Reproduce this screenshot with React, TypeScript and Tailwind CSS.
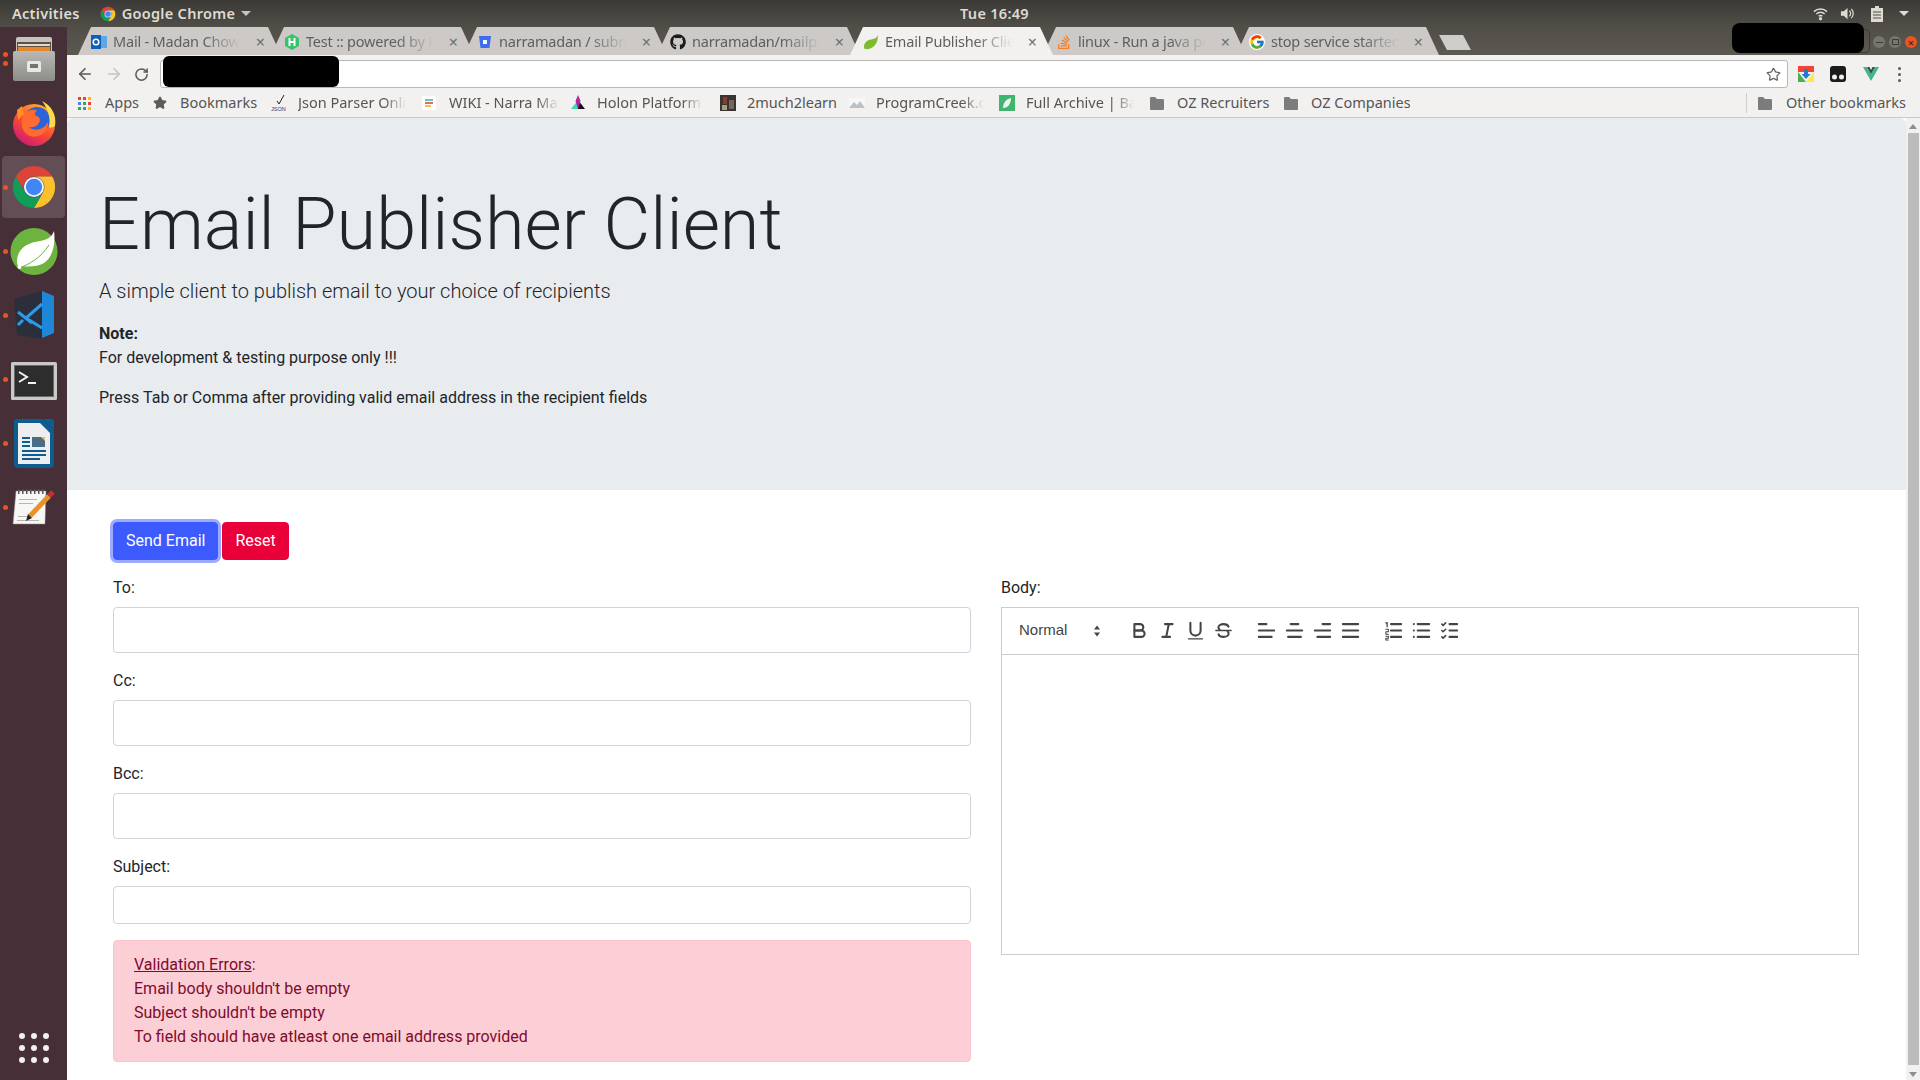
import { ReactNode } from "react";
import { FaGithub, FaStackOverflow } from "react-icons/fa";
import { FcGoogle } from "react-icons/fc";
import { ArrowLeft, ArrowRight, RotateCw, Star } from "lucide-react";

function ChromeLogo({ className }: { className: string }) {
  return (
    <svg viewBox="0 0 48 48" className={className}>
      <path fill="#db4437" d="M24 2A22 22 0 0 0 4.95 13L14.5 29.5A11 11 0 0 1 24 13H43.05A22 22 0 0 0 24 2Z" />
      <path fill="#fbc02d" d="M43.05 13H24A11 11 0 0 1 33.5 29.5L24 46A22 22 0 0 0 43.05 13Z" />
      <path fill="#0f9d58" d="M4.95 13A22 22 0 0 0 24 46L33.5 29.5A11 11 0 0 1 14.5 29.5Z" />
      <circle cx="24" cy="24" r="10.5" fill="#f1f3f4" />
      <circle cx="24" cy="24" r="8.5" fill="#4285f4" />
    </svg>
  );
}

function SpringLeaf({ className }: { className: string }) {
  return (
    <svg viewBox="0 0 48 48" className={className}>
      <path fill="#6db33f" d="M24 1a23.5 23.5 0 1 0 0 47 23.5 23.5 0 0 0 0-47Z" />
      <path fill="#fff" d="M44 4c-2 6-7 9-14 10C18 15.500 8 21 7 33c-.3 3 .5 5 2 7l3-1c6 1 15 1 22-3 8-5 12-18 10-32Z" />
      <path fill="none" stroke="#6db33f" strokeWidth="1" d="M9 41c9-3 22-10 30-23" />
      <circle cx="9.500" cy="40" r="2" fill="#fff" />
    </svg>
  );
}

function FilesIcon() {
  return (
    <svg viewBox="0 0 42 44" className="h-[44px] w-[42px]">
      <defs>
        <linearGradient id="cab" x1="0" y1="0" x2="0" y2="1">
          <stop offset="0" stopColor="#b8b8b4" />
          <stop offset="1" stopColor="#8d8d89" />
        </linearGradient>
      </defs>
      <path fill="#c4c4c0" d="M3 2Q3 0 5 0H37Q39 0 39 2V14H3Z" />
      <rect x="4" y="5" width="34" height="11" fill="#58524a" />
      <rect x="5" y="7" width="32" height="2" fill="#f4d6b2" />
      <rect x="5" y="10" width="32" height="4" fill="#e8862f" />
      <rect x="0" y="14" width="42" height="30" rx="2" fill="url(#cab)" />
      <rect x="14" y="24" width="14" height="11" rx="1.500" fill="#e8e8e6" />
      <rect x="17" y="27" width="8" height="4" fill="#77736d" />
    </svg>
  );
}

function FirefoxIcon() {
  return (
    <svg viewBox="0 0 46 46" className="h-[46px] w-[46px]">
      <defs>
        <linearGradient id="ffo" x1="0.800" y1="0" x2="0.200" y2="1">
          <stop offset="0" stopColor="#ffb52e" />
          <stop offset="0.500" stopColor="#ff4f2e" />
          <stop offset="1" stopColor="#c9157a" />
        </linearGradient>
      </defs>
      <circle cx="23" cy="25" r="21" fill="url(#ffo)" />
      <circle cx="26" cy="20" r="13" fill="#2b63d8" />
      <path fill="#ff6b2e" d="M13 14C18 9 24 9 26 11C22 13 24 16 28 17C31 22 25 29 18 27C23 32 33 30 37 22C38 33 26 40 17 35C10 31 9 21 13 14Z" />
      <path fill="#ffdc4a" d="M31 1C39 5 46 13 44 26C41 28 39 28 38 27C40 18 37 9 31 1Z" />
      <path fill="#ff8f26" d="M6 10L11 6L13 14L7 20Z" />
    </svg>
  );
}

function VsCodeIcon() {
  return (
    <svg viewBox="0 0 44 48" className="h-[48px] w-[44px]">
      <path fill="#2b2f3b" d="M2 8L30 0V48L5 44Z" />
      <path fill="#1e88d8" d="M30 0L42 5V42L30 47Z" />
      <path fill="none" stroke="#2b9cec" strokeWidth="3" d="M30 13L14 27L30 37M6 21L20 32M6 34L11 29" />
    </svg>
  );
}

function TerminalIcon() {
  return (
    <svg viewBox="0 0 46 38" className="mt-[4px] h-[38px] w-[46px]">
      <rect width="46" height="38" rx="1.500" fill="#c9c9c5" />
      <rect x="3" y="3" width="40" height="32" fill="#6a6a68" />
      <rect x="4" y="4" width="38" height="30" fill="#2d2d2d" />
      <path d="M8 10L16 15L8 20" fill="none" stroke="#f4f4f4" strokeWidth="2" />
      <rect x="17" y="20" width="8" height="2" fill="#f4f4f4" />
    </svg>
  );
}

function WriterIcon() {
  return (
    <svg viewBox="0 0 40 49" className="h-[49px] w-[40px]">
      <path fill="#0f5c8e" d="M3 0H28L40 12V45Q40 49 36 49H4Q0 49 0 45V3Q0 0 3 0Z" />
      <path fill="#eceeef" d="M4 4H26L36 14V45H4Z" />
      <path fill="#0f5c8e" d="M28 0H37Q40 0 40 3V12Z" />
      <rect x="8" y="18" width="8" height="2" fill="#0f5c8e" />
      <rect x="8" y="22" width="8" height="2" fill="#0f5c8e" />
      <rect x="8" y="26" width="8" height="2" fill="#0f5c8e" />
      <rect x="18" y="18" width="13" height="10" fill="#4a6d85" />
      <path fill="#e9c24a" d="M27 18H31V22Z" />
      <rect x="8" y="31" width="24" height="2" fill="#0f5c8e" />
      <rect x="8" y="35" width="24" height="2" fill="#0f5c8e" />
      <rect x="8" y="39" width="18" height="2" fill="#0f5c8e" />
    </svg>
  );
}

function EditorIcon() {
  return (
    <svg viewBox="0 0 46 38" className="h-[38px] w-[46px]">
      <path fill="#f7f7f5" stroke="#8a8a86" strokeWidth="0.500" d="M5 3H35L34 36H2Z" />
      {[7, 11, 15, 19, 23, 27, 31].map((x) => (
        <rect key={x} x={x} y="1" width="1.500" height="5" fill="#555" />
      ))}
      <rect x="8" y="11" width="18" height="1" fill="#b5b5b2" />
      <rect x="8" y="15" width="14" height="1" fill="#b5b5b2" />
      <rect x="7" y="28" width="10" height="1" fill="#b5b5b2" />
      <rect x="6" y="32" width="22" height="1" fill="#b5b5b2" />
      <path stroke="#e8932a" strokeWidth="5" d="M19 28L38 8" />
      <path stroke="#c9302c" strokeWidth="5" d="M38 8L42 4" />
      <path fill="#222" d="M15 33L17 26L21 30Z" />
    </svg>
  );
}

const DOCK = [
  { icon: <FilesIcon />, dots: 2 },
  { icon: <FirefoxIcon />, dots: 0 },
  { icon: <ChromeLogo className="h-[46px] w-[46px]" />, dots: 1, active: true },
  { icon: <SpringLeaf className="h-[48px] w-[48px]" />, dots: 1 },
  { icon: <VsCodeIcon />, dots: 1 },
  { icon: <TerminalIcon />, dots: 1 },
  { icon: <WriterIcon />, dots: 1 },
  { icon: <EditorIcon />, dots: 1 },
];

function Dock() {
  return (
    <aside className="flex w-[67px] shrink-0 flex-col bg-[#472f37]">
      {DOCK.map((d, i) => (
        <div key={i} className="relative flex h-16 shrink-0 items-center justify-center">
          {d.active && <div className="absolute inset-x-[2px] inset-y-[1px] rounded bg-white/15" />}
          <div className="absolute left-[3px] flex flex-col gap-[4px]">
            {Array.from({ length: d.dots }).map((_, k) => (
              <span key={k} className="block h-[5px] w-[5px] rounded-full bg-[#e9541f]" />
            ))}
          </div>
          <div className="relative flex items-center justify-center">{d.icon}</div>
        </div>
      ))}
      <div className="mt-auto mb-[17px] grid w-[30px] grid-cols-3 gap-[6px] self-center">
        {Array.from({ length: 9 }).map((_, i) => (
          <span key={i} className="h-[6px] w-[6px] rounded-full bg-[#f1efef]" />
        ))}
      </div>
    </aside>
  );
}

const TABS: { title: string; icon: ReactNode; active?: boolean }[] = [
  {
    title: "Mail - Madan Chowdary",
    icon: (
      <svg viewBox="0 0 16 16" className="h-4 w-4">
        <rect x="6" y="2" width="10" height="12" fill="#5ea6e6" />
        <rect y="1" width="10" height="14" fill="#0f5fb8" />
        <circle cx="5" cy="8" r="2.800" fill="none" stroke="#fff" strokeWidth="1.500" />
      </svg>
    ),
  },
  {
    title: "Test :: powered by Hoppscotch",
    icon: (
      <svg viewBox="0 0 16 16" className="h-4 w-4">
        <path fill="#35c46a" d="M8 0L15 4V12L8 16L1 12V4Z" />
        <path stroke="#fff" strokeWidth="2" d="M5.500 4V12M10.500 4V12M5.500 8H10.500" />
      </svg>
    ),
  },
  {
    title: "narramadan / submit-form",
    icon: (
      <svg viewBox="0 0 16 16" className="h-4 w-4">
        <path fill="#3d6ef0" d="M2 2H14L12.500 14H3.500Z" />
        <rect x="6" y="6" width="4" height="4" fill="#fff" />
      </svg>
    ),
  },
  { title: "narramadan/mailpublisher", icon: <FaGithub className="h-4 w-4 text-[#1b1b1b]" /> },
  {
    title: "Email Publisher Client",
    active: true,
    icon: (
      <svg viewBox="0 0 16 16" className="h-4 w-4">
        <path fill="#7fbb2f" d="M15 1C14 4 11 5 8 5.500C4 6 1 9 1 13C1 14 1.500 15 2 15C8 16 15 12 15 1Z" />
      </svg>
    ),
  },
  { title: "linux - Run a java process", icon: <FaStackOverflow className="h-4 w-4 text-[#f2802a]" /> },
  { title: "stop service started", icon: <FcGoogle className="h-4 w-4 rounded-full bg-white" /> },
];

function TabStrip() {
  return (
    <div className="relative flex h-[28px] shrink-0 bg-linear-to-b from-[#504e47] to-[#5b5950] pl-[11px]">
      {TABS.map((t, i) => (
        <div
          key={i}
          className={`${i === 0 ? "" : "-ml-[10px]"} ${t.active ? "z-10 bg-[#f2f1f0]" : "bg-[#ccc9c6]"} flex h-full w-[203px] shrink-0 items-center pt-[1px] pr-[16px] pl-[13px] [clip-path:polygon(0_100%,13px_0,calc(100%-13px)_0,100%_100%)]`}
        >
          <span className="mr-[6px] flex h-4 w-4 shrink-0 items-center justify-center">{t.icon}</span>
          <span className="flex-1 overflow-hidden text-[14.500px] tracking-[-0.2px] whitespace-nowrap text-[#5f5f5f] [mask-image:linear-gradient(to_right,black_65%,transparent_92%)]">
            {t.title}
          </span>
          <span className="ml-[4px] shrink-0 text-[16px] leading-none text-[#6e6e6e]">×</span>
        </div>
      ))}
      <div className="mt-[8px] h-[15px] w-[32px] bg-[#cfcdca] [clip-path:polygon(0_0,75%_0,100%_100%,25%_100%)]" />
      <div className="mt-[2px] mr-[50px] ml-auto h-[24px] w-[110px] rounded border border-[#3d3b36]" />
      <div className="absolute top-[9px] right-[3px] flex gap-[4px]">
        <span className="flex h-[12px] w-[12px] items-center justify-center rounded-full bg-[#77756e]">
          <span className="h-[1px] w-[7px] bg-[#3d3b36]" />
        </span>
        <span className="flex h-[12px] w-[12px] items-center justify-center rounded-full bg-[#77756e]">
          <span className="h-[6px] w-[7px] border border-[#3d3b36]" />
        </span>
        <span className="flex h-[12px] w-[12px] items-center justify-center rounded-full bg-[#e95420] text-[11px] leading-none text-[#3d2015]">×</span>
      </div>
    </div>
  );
}

function FolderIcon() {
  return (
    <svg viewBox="0 0 14 13" className="h-[13px] w-[14px] shrink-0">
      <path fill="#7c7c7c" d="M0 1Q0 0 1 0H5L7 2H13Q14 2 14 3V12Q14 13 13 13H1Q0 13 0 12Z" />
    </svg>
  );
}

const BOOKMARKS: { label: string; icon: ReactNode; slot: string; text: string; fade?: boolean }[] = [
  {
    label: "Apps",
    slot: "w-[75px]",
    text: "w-[36px]",
    icon: (
      <span className="grid h-[13px] w-[13px] grid-cols-3 gap-[2px]">
        {["#ea4335", "#ea4335", "#fbbc05", "#4285f4", "#34a853", "#ea4335", "#34a853", "#4285f4", "#fbbc05"].map((c, i) => (
          <svg key={i} viewBox="0 0 3 3" className="h-[3px] w-[3px]">
            <rect width="3" height="3" fill={c} />
          </svg>
        ))}
      </span>
    ),
  },
  {
    label: "Bookmarks",
    slot: "w-[118px]",
    text: "w-[78px]",
    icon: <Star className="h-[14px] w-[14px] fill-[#5b5b5b] text-[#5b5b5b]" />,
  },
  {
    label: "Json Parser Online",
    slot: "w-[151px]",
    text: "w-[108px]",
    fade: true,
    icon: (
      <svg viewBox="0 0 16 16" className="h-4 w-4">
        <path d="M6 6L8 9L13 0" fill="none" stroke="#222" strokeWidth="1" />
        <text x="0" y="15.500" fontSize="5.500" fill="#1b3a6b" fontFamily="Liberation Sans">JSON</text>
      </svg>
    ),
  },
  {
    label: "WIKI - Narra Madan",
    slot: "w-[148px]",
    text: "w-[110px]",
    fade: true,
    icon: (
      <svg viewBox="0 0 14 14" className="h-[14px] w-[14px]">
        <rect width="14" height="14" rx="2" fill="#fff" />
        <rect x="3" y="3" width="8" height="2" fill="#67c6b6" />
        <rect x="3" y="6" width="8" height="2" fill="#ef6a5a" />
        <rect x="3" y="9" width="6" height="2" fill="#f5c242" />
      </svg>
    ),
  },
  {
    label: "Holon Platform",
    slot: "w-[150px]",
    text: "w-[106px]",
    fade: true,
    icon: (
      <svg viewBox="0 0 16 16" className="h-4 w-4">
        <path fill="#3ddbb5" d="M1 14L8 5L8 14Z" />
        <path fill="#111" d="M8 5L15 14H8Z" />
        <path fill="#b0279f" d="M8 0L10.500 6L8 14L5.500 6Z" />
      </svg>
    ),
  },
  {
    label: "2much2learn",
    slot: "w-[129px]",
    text: "w-[90px]",
    icon: (
      <svg viewBox="0 0 16 16" className="h-4 w-4">
        <rect width="16" height="16" fill="#3a3430" />
        <rect x="3" y="2" width="4" height="7" fill="#8c3b2e" />
        <rect x="9" y="5" width="5" height="9" fill="#71695d" />
        <rect x="2" y="10" width="5" height="5" fill="#a89b85" />
      </svg>
    ),
  },
  {
    label: "ProgramCreek.com",
    slot: "w-[150px]",
    text: "w-[108px]",
    fade: true,
    icon: (
      <svg viewBox="0 0 16 16" className="h-4 w-4">
        <rect y="3" width="16" height="10" fill="#f7f7f7" />
        <path fill="#b9c2c9" d="M0 13L5 7L8 10L11 6L16 13Z" />
      </svg>
    ),
  },
  {
    label: "Full Archive | Baeldung",
    slot: "w-[151px]",
    text: "w-[108px]",
    fade: true,
    icon: (
      <svg viewBox="0 0 16 16" className="h-4 w-4">
        <rect width="16" height="16" fill="#3fb56f" />
        <path fill="#e7f7ec" d="M12 3C12 9 9 13 4 13C4 8 7 4 12 3Z" />
      </svg>
    ),
  },
  { label: "OZ Recruiters", slot: "w-[134px]", text: "w-[98px]", icon: <FolderIcon /> },
  { label: "OZ Companies", slot: "w-[126px]", text: "w-[99px]", icon: <FolderIcon /> },
];

function Toolbar() {
  return (
    <div className="flex h-[34px] shrink-0 items-center bg-[#f2f1f0] pt-[4px]">
      <div className="flex w-[93px] items-center pl-[9px]">
        <ArrowLeft className="h-[18px] w-[18px] text-[#5a5a5a]" strokeWidth={2.200} />
        <ArrowRight className="ml-[11px] h-[18px] w-[18px] text-[#c4c4c4]" strokeWidth={2.200} />
        <RotateCw className="ml-[11px] h-[15px] w-[15px] text-[#5a5a5a]" strokeWidth={2.400} />
      </div>
      <div className="flex h-[28px] w-[1628px] items-center justify-end rounded-[3px] border border-[#b8b8b8] bg-white pr-[6px]">
        <Star className="h-[15px] w-[15px] text-[#666]" strokeWidth={2} />
      </div>
      <div className="ml-[10px] flex items-center">
        <svg viewBox="0 0 16 16" className="h-4 w-4">
          <path fill="#f44336" d="M0 0H16V6H0Z" />
          <path fill="#4caf50" d="M0 6L8 16H0Z" />
          <path fill="#ffeb3b" d="M16 6V16H8Z" />
          <path fill="#2979c9" d="M6 3H10V8H12.500L8 13L3.500 8H6Z" />
        </svg>
        <svg viewBox="0 0 16 16" className="ml-[16px] h-4 w-4">
          <rect width="16" height="16" rx="3" fill="#1b1b1b" />
          <circle cx="4.500" cy="11" r="2.500" fill="#f2f1f0" />
          <circle cx="11.500" cy="11" r="2.500" fill="#f2f1f0" />
        </svg>
        <svg viewBox="0 0 16 16" className="ml-[17px] h-4 w-4">
          <path fill="#41b883" d="M0 1H4L8 8L12 1H16L8 15Z" />
          <path fill="#35495e" d="M4 1H6.500L8 4L9.500 1H12L8 8Z" />
        </svg>
        <span className="ml-[19px] flex flex-col gap-[3px]">
          <span className="h-[3px] w-[3px] rounded-full bg-[#5a5a5a]" />
          <span className="h-[3px] w-[3px] rounded-full bg-[#5a5a5a]" />
          <span className="h-[3px] w-[3px] rounded-full bg-[#5a5a5a]" />
        </span>
      </div>
    </div>
  );
}

function BookmarkBar() {
  return (
    <div className="flex h-[29px] shrink-0 items-center border-b border-[#c9c9c9] bg-[#f2f1f0] pl-[11px] text-[14.500px] text-[#555]">
      {BOOKMARKS.map((b) => (
        <div key={b.label} className={`${b.slot} flex shrink-0 items-center`}>
          <span className="flex w-[27px] shrink-0 items-center">{b.icon}</span>
          <span
            className={`${b.text} overflow-hidden whitespace-nowrap ${b.fade ? "[mask-image:linear-gradient(to_right,black_80%,transparent)]" : ""}`}
          >
            {b.label}
          </span>
        </div>
      ))}
      <div className="ml-auto flex h-[20px] items-center border-l border-[#cfcfcf] pr-[14px] pl-[11px]">
        <FolderIcon />
        <span className="ml-[14px] whitespace-nowrap">Other bookmarks</span>
      </div>
    </div>
  );
}

function QlIcon({ children }: { children: ReactNode }) {
  return (
    <span className="flex h-6 w-7 items-center justify-center">
      <svg
        viewBox="0 0 18 18"
        className="h-[23px] w-[23px] fill-none stroke-[#444] stroke-[1.600] [stroke-linecap:round] [stroke-linejoin:round]"
      >
        {children}
      </svg>
    </span>
  );
}

function EditorToolbar() {
  return (
    <div className="flex h-[47px] items-center border-b border-[#ccc] px-2 pb-[1px] font-['Liberation_Sans',sans-serif]">
      <div className="flex w-[100px] items-center justify-between pr-[4px] pl-[9px] text-[15px] text-[#444]">
        <span className="-mt-[1px]">Normal</span>
        <svg viewBox="0 0 18 18" className="h-[18px] w-[18px] fill-[#444]">
          <path d="M9 3.500L12 7.500H6Z" />
          <path d="M9 14.500L6 10.500H12Z" />
        </svg>
      </div>
      <div className="ml-[15px] flex">
        <QlIcon>
          <path d="M5 4H9.500A2.500 2.500 0 0 1 12 6.500A2.500 2.500 0 0 1 9.500 9H5Z" />
          <path d="M5 9H10.500A2.500 2.500 0 0 1 13 11.500A2.500 2.500 0 0 1 10.500 14H5Z" />
        </QlIcon>
        <QlIcon>
          <line x1="7" x2="13" y1="4" y2="4" />
          <line x1="5" x2="11" y1="14" y2="14" />
          <line x1="8" x2="10" y1="14" y2="4" />
        </QlIcon>
        <QlIcon>
          <path d="M5 3V9A4 4 0 0 0 9 13A4 4 0 0 0 13 9V3" />
          <line x1="3.500" x2="14.500" y1="15.500" y2="15.500" strokeWidth="1" />
        </QlIcon>
        <QlIcon>
          <line x1="3" x2="15" y1="9" y2="9" strokeWidth="1" />
          <path d="M12.900 6C12.400 4.700 10.900 4 9 4C6.800 4 5 5.100 5 6.500C5 7.300 5.400 7.900 6 8.300" />
          <path d="M5.100 12C5.600 13.300 7.100 14 9 14C11.200 14 13 12.900 13 11.500C13 10.700 12.700 10.200 12.200 9.800" />
        </QlIcon>
      </div>
      <div className="ml-[15px] flex">
        <QlIcon>
          <line x1="3" x2="15" y1="9" y2="9" />
          <line x1="3" x2="13" y1="14" y2="14" />
          <line x1="3" x2="9" y1="4" y2="4" />
        </QlIcon>
        <QlIcon>
          <line x1="15" x2="3" y1="9" y2="9" />
          <line x1="14" x2="4" y1="14" y2="14" />
          <line x1="12" x2="6" y1="4" y2="4" />
        </QlIcon>
        <QlIcon>
          <line x1="15" x2="3" y1="9" y2="9" />
          <line x1="15" x2="5" y1="14" y2="14" />
          <line x1="15" x2="9" y1="4" y2="4" />
        </QlIcon>
        <QlIcon>
          <line x1="15" x2="3" y1="9" y2="9" />
          <line x1="15" x2="3" y1="14" y2="14" />
          <line x1="15" x2="3" y1="4" y2="4" />
        </QlIcon>
      </div>
      <div className="ml-[15px] flex">
        <QlIcon>
          <line x1="7" x2="15" y1="4" y2="4" />
          <line x1="7" x2="15" y1="9" y2="9" />
          <line x1="7" x2="15" y1="14" y2="14" />
          <line x1="3" x2="4" y1="3" y2="3" strokeWidth="1" />
          <line x1="4" x2="4" y1="3" y2="6" strokeWidth="1" />
          <path d="M3 8H5V10H3V12H5" strokeWidth="0.800" />
          <path d="M3 13.500H5V15H3V16.500H5" strokeWidth="0.800" />
        </QlIcon>
        <QlIcon>
          <line x1="6" x2="15" y1="4" y2="4" />
          <line x1="6" x2="15" y1="9" y2="9" />
          <line x1="6" x2="15" y1="14" y2="14" />
          <line x1="3" x2="3" y1="4" y2="4" />
          <line x1="3" x2="3" y1="9" y2="9" />
          <line x1="3" x2="3" y1="14" y2="14" />
        </QlIcon>
        <QlIcon>
          <line x1="9" x2="15" y1="4" y2="4" />
          <line x1="9" x2="15" y1="9" y2="9" />
          <line x1="9" x2="15" y1="14" y2="14" />
          <polyline points="3 4 4 5 6 3" strokeWidth="1.200" />
          <polyline points="3 9 4 10 6 8" strokeWidth="1.200" />
          <polyline points="3 14 4 15 6 13" strokeWidth="1.200" />
        </QlIcon>
      </div>
    </div>
  );
}

function Field({ label, tall }: { label: string; tall?: boolean }) {
  return (
    <div className={tall ? "mb-[15px]" : "mb-4"}>
      <label className="mb-[7px] block pt-[1px]">{label}</label>
      <input className={`${tall ? "h-[46px]" : "h-[38px]"} block w-full rounded border border-[#ced4da] bg-white`} />
    </div>
  );
}

function Page() {
  return (
    <div className="h-full overflow-hidden bg-white text-[#212529]">
      <div className="mb-8 rounded-t-md bg-[#e9ecef] px-8 py-16">
        <h1 className="mb-2 text-[72px] leading-[1.2] font-light">Email Publisher Client</h1>
        <p className="mb-4 text-[20px] leading-[30px] font-light">A simple client to publish email to your choice of recipients</p>
        <p className="mb-4">
          <strong className="font-bold">Note:</strong>
          <br />
          For development &amp; testing purpose only !!!
        </p>
        <p className="mb-4">Press Tab or Comma after providing valid email address in the recipient fields</p>
      </div>

      <div className="px-[46px]">
        <div className="mb-[15px] flex gap-[4px]">
          <button className="h-[38px] rounded border border-[#3d5afe] bg-[#3d5afe] px-3 text-white ring-[3px] ring-[#9cabff]">Send Email</button>
          <button className="h-[38px] rounded border border-[#ea0038] bg-[#ea0038] px-3 text-white">Reset</button>
        </div>
        <div className="grid w-[1746px] grid-cols-2 gap-x-[30px]">
          <div>
            <Field label="To:" tall />
            <Field label="Cc:" tall />
            <Field label="Bcc:" tall />
            <Field label="Subject:" />
            <div className="rounded border border-[#fbc3ce] bg-[#fccfd7] px-5 py-3 text-[#7f0a2c]">
              <div>
                <span className="underline">Validation Errors</span>:
              </div>
              <div>Email body shouldn't be empty</div>
              <div>Subject shouldn't be empty</div>
              <div>To field should have atleast one email address provided</div>
            </div>
          </div>
          <div>
            <label className="mb-[7px] block pt-[1px]">Body:</label>
            <div className="h-[348px] border border-[#ccc]">
              <EditorToolbar />
            </div>
          </div>
        </div>
      </div>
    </div>
  );
}

export default function App() {
  return (
    <div className="relative flex h-screen w-full flex-col overflow-hidden font-['Roboto',sans-serif] text-[16px]">
      {/* Ubuntu top bar */}
      <header className="flex h-[27px] shrink-0 items-center justify-between bg-linear-to-b from-[#3b3a36] to-[#504e47] pr-[11px] pl-[12px] font-['Noto_Sans',sans-serif] text-[14.500px] font-semibold tracking-[0.3px] text-[#dfdbd2]">
        <div className="flex w-[434px] items-center">
          <span>Activities</span>
          <ChromeLogo className="ml-[20px] h-[16px] w-[16px]" />
          <span className="ml-[6px]">Google Chrome</span>
          <span className="ml-[6px] h-0 w-0 border-x-[5px] border-t-[5px] border-x-transparent border-t-[#c9c6be]" />
        </div>
        <span>Tue 16:49</span>
        <div className="flex w-[366px] items-center justify-end">
          <svg viewBox="0 0 16 16" className="h-[15px] w-[15px] fill-none stroke-[#dfdbd2] stroke-[1.500]">
            <path d="M1 6A10 10 0 0 1 15 6" />
            <path d="M3.500 8.500A6.500 6.500 0 0 1 12.500 8.500" />
            <path d="M6 11A3 3 0 0 1 10 11" />
            <circle cx="8" cy="13.500" r="1" fill="#dfdbd2" />
          </svg>
          <svg viewBox="0 0 16 16" className="ml-[12px] h-[15px] w-[15px] fill-[#dfdbd2]">
            <path d="M1 5.500H4L8 2V14L4 10.500H1Z" />
            <path d="M10 5A4 4 0 0 1 10 11M12 3A7 7 0 0 1 12 13" fill="none" stroke="#dfdbd2" strokeWidth="1.300" />
          </svg>
          <svg viewBox="0 0 12 16" className="ml-[16px] h-[16px] w-[12px]">
            <path fill="#dfdbd2" d="M4 0H8V2H12V16H0V2H4Z" />
            <path stroke="#504e47" strokeWidth="1" d="M2 6H10M2 9H10M2 12H10" />
          </svg>
          <span className="ml-[16px] h-0 w-0 border-x-[5px] border-t-[5px] border-x-transparent border-t-[#dfdbd2]" />
        </div>
      </header>

      <div className="flex min-h-0 flex-1">
        <Dock />
        <div className="flex min-w-0 flex-1 flex-col">
          <div className="flex flex-col font-['Noto_Sans',sans-serif]">
            <TabStrip />
            <Toolbar />
            <BookmarkBar />
          </div>
          <div className="flex min-h-0 flex-1">
            <div className="min-w-0 flex-1">
              <Page />
            </div>
            {/* scrollbar */}
            <div className="flex w-[14px] shrink-0 flex-col items-center bg-[#f1f1f1]">
              <span className="mt-[6px] h-0 w-0 border-x-[4px] border-b-[5px] border-x-transparent border-b-[#8e8e8e]" />
              <span className="mt-[4px] h-[932px] w-[11px] bg-[#bcbcbc]" />
              <span className="mt-auto mb-[3px] h-0 w-0 border-x-[4px] border-t-[5px] border-x-transparent border-t-[#8e8e8e]" />
            </div>
          </div>
        </div>
      </div>

      {/* blacked out areas of the original capture */}
      <div className="absolute top-[56px] left-[163px] h-[31px] w-[176px] rounded-[6px] bg-black" />
      <div className="absolute top-[23px] left-[1732px] h-[30px] w-[132px] rounded-[8px] bg-black" />
    </div>
  );
}
